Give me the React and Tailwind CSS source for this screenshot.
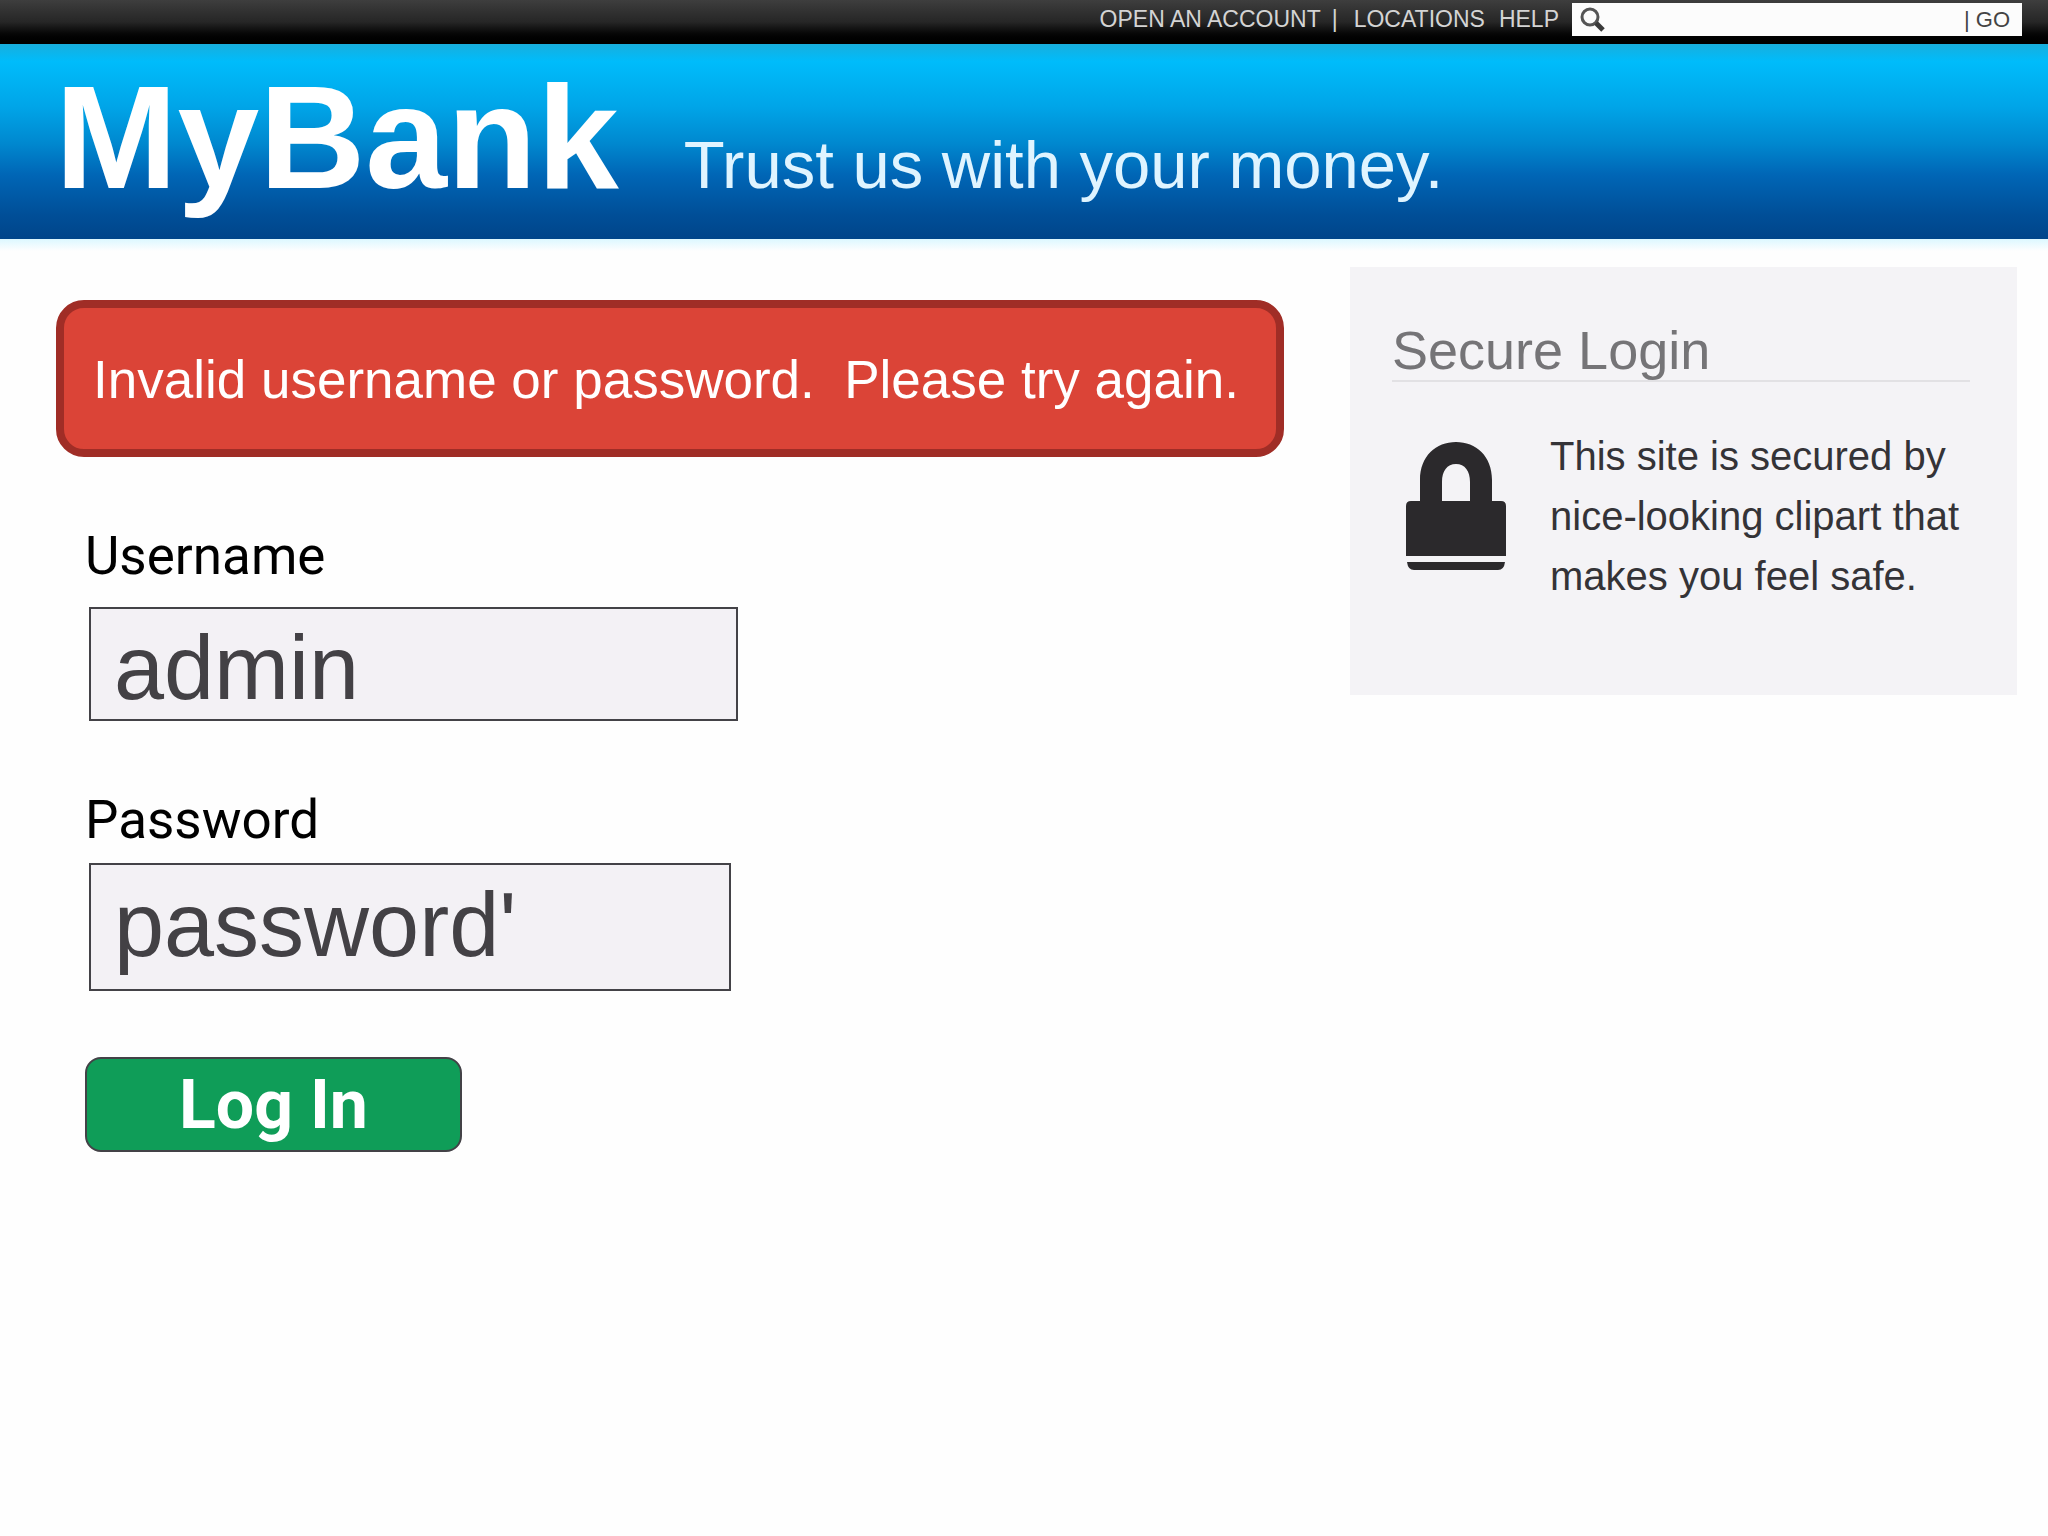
import { useState } from "react";

function SearchIcon() {
  return (
    <svg viewBox="0 0 26 26" className="h-[26px] w-[26px] shrink-0" fill="none" stroke="#555" aria-hidden="true">
      <circle cx="11" cy="10" r="8" strokeWidth="3" />
      <path d="M17 16l7 7" stroke="#3a3a3a" strokeWidth="5" />
    </svg>
  );
}

function LockIcon() {
  return (
    <svg viewBox="0 0 100 128" className="h-32 w-[100px] shrink-0" fill="#2b292c" aria-hidden="true">
      <path d="M14 59V38C14 14 30 0 50 0s36 14 36 38v21h9q5 0 5 5v50H0V64q0-5 5-5zM36 59h28V40c0-11-5-18-14-18s-14 7-14 18z" />
      <path d="M1 120h98q-1 8-7 8H8q-6 0-7-8z" />
    </svg>
  );
}

function TopBar() {
  return (
    <div className="flex h-11 items-start justify-end bg-linear-to-b from-[#3e3e3e] via-[#262626] to-black pr-[26px] text-[23px] leading-7 text-[#d4d4d4]">
      <nav className="flex pt-[5px]">
        <a href="#open">OPEN AN ACCOUNT</a>
        <span className="mr-4 ml-[11px]">|</span>
        <a href="#locations">LOCATIONS</a>
        <a href="#help" className="ml-[14px]">HELP</a>
      </nav>
      <form className="mt-[3px] ml-[13px] flex h-[33px] w-[450px] items-center bg-[#fcfcfc] pr-3 pl-[7px] text-[22px] text-[#444]">
        <SearchIcon />
        <input type="search" aria-label="Search" className="min-w-0 flex-1 outline-none" />
        <span className="mr-[6px]">|</span>
        <button type="button">GO</button>
      </form>
    </div>
  );
}

function Header() {
  return (
    <header className="flex h-[195px] items-baseline gap-[65px] bg-[linear-gradient(to_bottom,#18aedd_0%,#00bcfb_9%,#00a5e8_32%,#0088cf_51%,#0066b6_67%,#004e97_88%,#00458a_100%)] pt-px pl-[55px] text-white">
      <h1 className="text-[147px] leading-[184px] font-bold">MyBank</h1>
      <p className="text-[67px] text-[#dff4ff]">Trust us with your money.</p>
    </header>
  );
}

function SecureLogin() {
  return (
    <aside className="mt-4 h-[428px] w-[667px] shrink-0 bg-[#f4f3f6] pt-[53px] pr-[47px] pl-[42px]">
      <h2 className="border-b-2 border-[#e2e1e4] text-[54px] leading-[60px] text-[#757477]">Secure Login</h2>
      <div className="mt-11 flex gap-11 pl-[14px]">
        <div className="pt-4">
          <LockIcon />
        </div>
        <p className="text-[40px] leading-[60px] whitespace-nowrap text-[#343337]">
          This site is secured by
          <br />
          nice-looking clipart that
          <br />
          makes you feel safe.
        </p>
      </div>
    </aside>
  );
}

export default function App() {
  const [username, setUsername] = useState("admin");
  const [password, setPassword] = useState("password'");

  return (
    <div className="min-h-screen bg-[#fefefe] font-['Liberation_Sans',Arial,sans-serif]">
      <TopBar />
      <Header />
      <div className="h-3 bg-linear-to-b from-[#dcf8ff] to-[#fefefe]" />
      <main className="flex items-start gap-[66px] pr-[31px] pl-14">
        <div className="flex-1 pt-[49px]">
          <div
            role="alert"
            className="flex h-[157px] items-center rounded-[28px] border-8 border-[#a02d26] bg-[#db4437] pt-[3px] pl-[29px] text-[53px] whitespace-pre text-white"
          >
            {"Invalid username or password.  Please try again."}
          </div>

          <form className="flex flex-col items-start pt-[67px] pl-[29px]">
            <label htmlFor="username" className="font-[Roboto,sans-serif] text-[53px] leading-[64px] text-black">
              Username
            </label>
            <input
              id="username"
              type="text"
              value={username}
              onChange={(e) => setUsername(e.target.value)}
              className="mt-[19px] ml-1 h-[114px] w-[649px] border-2 border-[#434247] bg-[#f3f1f5] px-[23px] pt-2 text-[90px] text-[#434145] outline-none"
            />

            <label htmlFor="password" className="mt-[67px] font-[Roboto,sans-serif] text-[53px] leading-[64px] text-black">
              Password
            </label>
            <input
              id="password"
              type="text"
              value={password}
              onChange={(e) => setPassword(e.target.value)}
              className="mt-[11px] ml-1 h-32 w-[642px] border-2 border-[#434247] bg-[#f3f1f5] px-[23px] pb-1 text-[90px] text-[#434145] outline-none"
            />

            <button
              type="button"
              className="mt-[66px] h-[95px] w-[377px] rounded-2xl border-2 border-[#434247] bg-[#0f9d58] font-[Roboto,sans-serif] text-[68px] leading-[80px] font-bold text-white"
            >
              Log In
            </button>
          </form>
        </div>

        <SecureLogin />
      </main>
    </div>
  );
}
